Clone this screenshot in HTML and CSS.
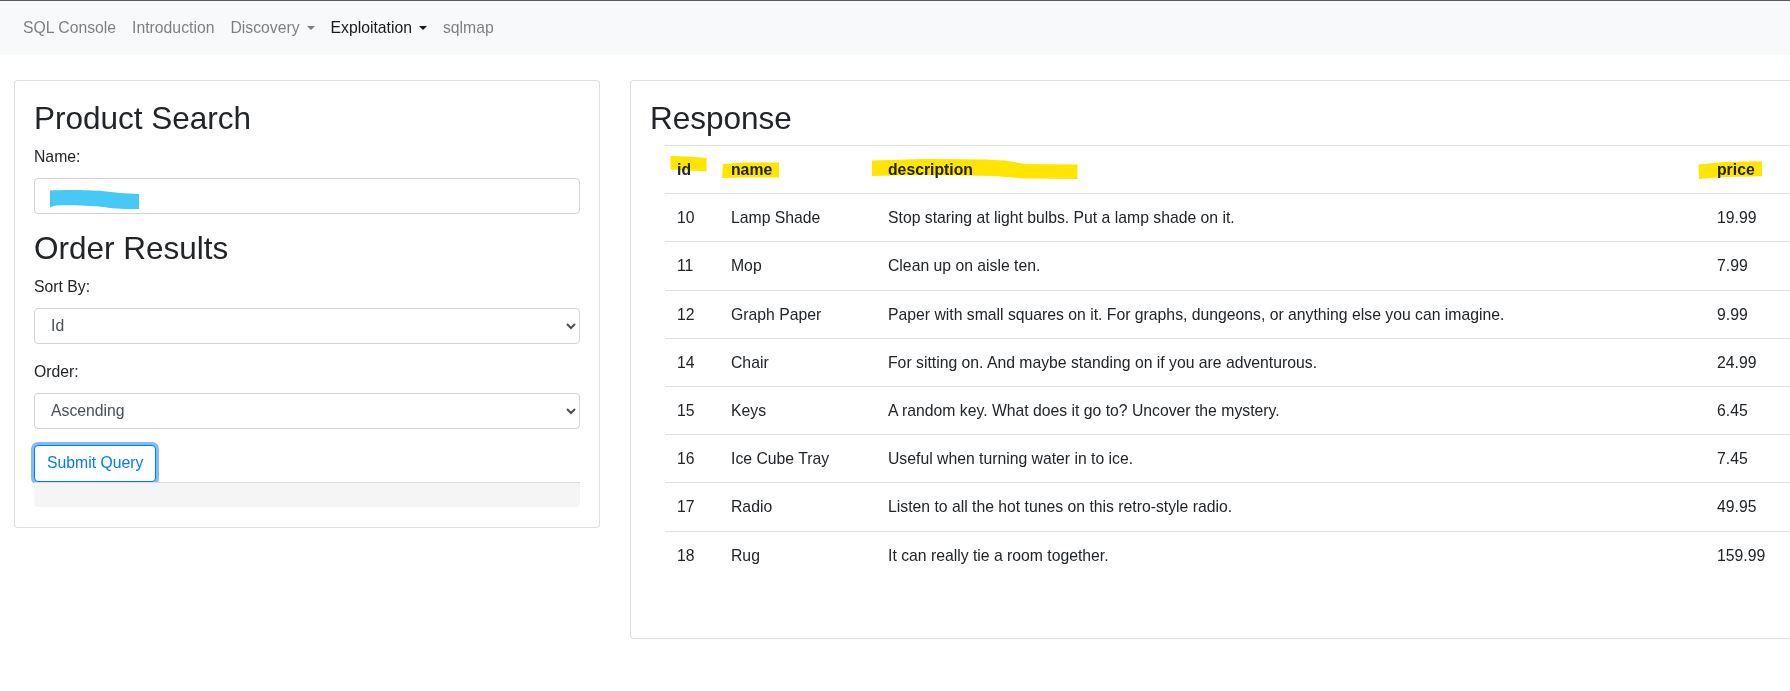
FILE: index.html
```html
<!DOCTYPE html>
<html lang="en">
<head>
<meta charset="utf-8">
<title>Product Search</title>
<link rel="stylesheet" href="styles.css">
</head>
<body>
<nav class="navbar">
  <a class="nav-link" href="#">SQL Console</a>
  <a class="nav-link" href="#">Introduction</a>
  <a class="nav-link" href="#">Discovery<span class="caret"></span></a>
  <a class="nav-link active" href="#">Exploitation<span class="caret"></span></a>
  <a class="nav-link" href="#">sqlmap</a>
</nav>

<main class="layout">
  <section class="card card-left">
    <h2 class="title">Product Search</h2>
    <div class="form-group">
      <label class="label" for="name">Name:</label>
      <div class="field">
        <input class="control" id="name" type="text" value="">
        <svg class="scribble" width="546" height="36" viewBox="0 0 546 36" aria-hidden="true">
          <path d="M16 12.5 C30 11.5 55 11.8 68 13 C80 14.5 92 15.5 105 16 L105 31 C92 31 82 31 70 29 C55 27.5 35 27 22 27.5 C19 28 17 29 16 29.5 Z" fill="#47c9f5"/>
        </svg>
      </div>
    </div>
    <h2 class="title">Order Results</h2>
    <div class="form-group">
      <label class="label" for="sort">Sort By:</label>
      <select class="control select" id="sort">
        <option>Id</option>
        <option>Name</option>
        <option>Price</option>
      </select>
    </div>
    <div class="form-group">
      <label class="label" for="order">Order:</label>
      <select class="control select" id="order">
        <option>Ascending</option>
        <option>Descending</option>
      </select>
    </div>
    <button class="btn-submit" type="button">Submit Query</button>
    <div class="output"></div>
  </section>

  <section class="card card-right">
    <h2 class="title">Response</h2>
    <div class="table-wrap">
      <table class="results">
        <colgroup>
          <col class="c-id"><col class="c-name"><col class="c-desc"><col class="c-price">
        </colgroup>
        <thead>
          <tr><th>id</th><th>name</th><th>description</th><th>price</th></tr>
        </thead>
        <tbody>
          <tr><td>10</td><td>Lamp Shade</td><td>Stop staring at light bulbs. Put a lamp shade on it.</td><td>19.99</td></tr>
          <tr><td>11</td><td>Mop</td><td>Clean up on aisle ten.</td><td>7.99</td></tr>
          <tr><td>12</td><td>Graph Paper</td><td>Paper with small squares on it. For graphs, dungeons, or anything else you can imagine.</td><td>9.99</td></tr>
          <tr><td>14</td><td>Chair</td><td>For sitting on. And maybe standing on if you are adventurous.</td><td>24.99</td></tr>
          <tr><td>15</td><td>Keys</td><td>A random key. What does it go to? Uncover the mystery.</td><td>6.45</td></tr>
          <tr><td>16</td><td>Ice Cube Tray</td><td>Useful when turning water in to ice.</td><td>7.45</td></tr>
          <tr><td>17</td><td>Radio</td><td>Listen to all the hot tunes on this retro-style radio.</td><td>49.95</td></tr>
          <tr><td>18</td><td>Rug</td><td>It can really tie a room together.</td><td>159.99</td></tr>
        </tbody>
      </table>
      <svg class="highlights" width="1160" height="48" viewBox="0 0 1160 48" aria-hidden="true">
        <polygon points="5.5,11 23,11.5 41.5,13 41.5,26.5 25,25.5 5.5,24.5" fill="#ffe500"/>
        <polygon points="58,19 80,17.5 114,17.5 114,32.5 80,32.5 57,33" fill="#ffe500"/>
        <polygon points="207,15.5 260,14 320,14.5 340,15.5 360,19 412.5,19.5 412.5,34 360,33.5 330,31 300,30.5 250,30 207,31" fill="#ffe500"/>
        <polygon points="1033.5,19.5 1060,17 1097,16.3 1097,31.3 1060,32 1034,34" fill="#ffe500"/>
      </svg>
    </div>
  </section>
</main>
</body>
</html>
```

FILE: styles.css
```css
html, body {
  margin: 0;
  padding: 0;
  overflow: hidden;
}

body {
  font-family: "Liberation Sans", Arial, Helvetica, sans-serif;
  font-size: 15.75px;
  line-height: 1.5;
  color: #212529;
  background: #ffffff;
  border-top: 1px solid #5c5c5c;
}

/* navbar */
.navbar {
  display: flex;
  align-items: center;
  height: 54px;
  padding: 0 15px;
  background: #f8f9fa;
}

.nav-link {
  padding: 0 8px;
  color: rgba(0, 0, 0, 0.5);
  text-decoration: none;
  white-space: nowrap;
}

.nav-link.active {
  color: rgba(0, 0, 0, 0.9);
}

.caret {
  display: inline-block;
  margin-left: 7px;
  vertical-align: 3px;
  border-top: 4.5px solid currentColor;
  border-left: 4px solid transparent;
  border-right: 4px solid transparent;
}

/* layout */
.layout {
  display: grid;
  grid-template-columns: 586px 1220px;
  column-gap: 30px;
  align-items: start;
  padding: 25px 0 0 14px;
  width: max-content;
}

.card {
  border: 1px solid rgba(0, 0, 0, 0.125);
  border-radius: 4px;
  padding: 19px;
  background: #fff;
}

.card-left {
  padding-bottom: 20px;
}

.title {
  margin: 0 0 7.75px;
  font-size: 31.5px;
  font-weight: 500;
  line-height: 37.2px;
  color: #212529;
}

.form-group {
  margin-bottom: 16px;
}

.label {
  display: block;
  line-height: 23px;
  margin-bottom: 10px;
}

.field {
  position: relative;
}

.control {
  display: block;
  box-sizing: border-box;
  width: 100%;
  height: 36px;
  padding: 0 12px;
  font-family: inherit;
  font-size: 15.75px;
  color: #495057;
  background-color: #fff;
  border: 1px solid #ced4da;
  border-radius: 4px;
  margin: 0;
}

.select {
  padding: 0 8px 0 12px;
}

.scribble {
  position: absolute;
  left: 0;
  top: 0;
  pointer-events: none;
}

.btn-submit {
  display: block;
  height: 37px;
  padding: 0 12px;
  margin: 0;
  font-family: inherit;
  font-size: 15.75px;
  color: #007bff;
  background: #fff;
  border: 1px solid #007bff;
  border-radius: 4px;
  box-shadow: 0 0 0 3px rgba(0, 123, 255, 0.5);
}

.output {
  height: 24px;
  border-top: 1px solid #dddddd;
  background: #f5f5f5;
  border-radius: 0 0 4px 4px;
}

/* response table */
.table-wrap {
  position: relative;
  margin: 1px 0 40px 15px;
  width: 1160px;
}

.results {
  border-collapse: collapse;
  table-layout: fixed;
  width: 1160px;
}

.c-id { width: 54px; }
.c-name { width: 157px; }
.c-desc { width: 829px; }
.c-price { width: 120px; }

.results th,
.results td {
  padding: 12px;
  line-height: 23.2px;
  border-top: 1px solid #dee2e6;
  text-align: left;
  vertical-align: top;
  white-space: nowrap;
}

.results th {
  font-weight: bold;
  color: #212529;
}

.highlights {
  position: absolute;
  left: 0;
  top: 0;
  mix-blend-mode: multiply;
  pointer-events: none;
}
```
